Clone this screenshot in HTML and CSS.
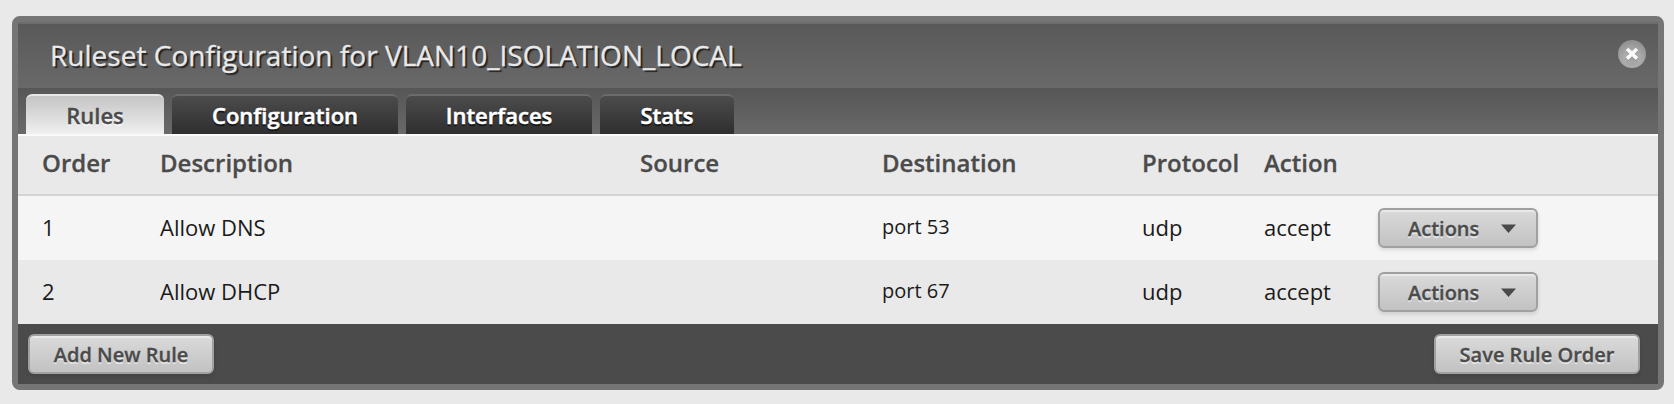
FILE: index.html
```html
<!DOCTYPE html>
<html lang="en">
<head>
<meta charset="utf-8">
<title>Ruleset Configuration</title>
<link rel="stylesheet" href="styles.css">
</head>
<body>
<section class="dialog">
  <header class="dialog-header">
    <h1 class="title">Ruleset Configuration for VLAN10_ISOLATION_LOCAL</h1>
    <button class="close" aria-label="Close">
      <svg width="30" height="30" viewBox="0 0 30 30">
        <defs><radialGradient id="disc" cx=".5" cy=".7" r=".75"><stop offset="0" stop-color="#a2a2a2"/><stop offset=".4" stop-color="#acacac"/><stop offset="1" stop-color="#8a8a8a"/></radialGradient></defs>
        <circle cx="15" cy="15" r="14" fill="url(#disc)"/>
        <path d="M10 11l10 9.6M20 11l-10 9.6" stroke="#777" stroke-width="4" opacity=".4"/>
        <path d="M10 10l10 9.6M20 10l-10 9.6" stroke="#fafafa" stroke-width="3.6"/>
      </svg>
    </button>
  </header>
  <nav class="tabs">
    <a class="tab tab-rules active"><span>Rules</span></a>
    <a class="tab tab-config"><span>Configuration</span></a>
    <a class="tab tab-interfaces"><span>Interfaces</span></a>
    <a class="tab tab-stats"><span>Stats</span></a>
  </nav>
  <div class="table">
    <div class="row head"><span>Order</span><span>Description</span><span>Source</span><span>Destination</span><span>Protocol</span><span>Action</span><span></span></div>
    <div class="row odd"><span>1</span><span>Allow DNS</span><span></span><span class="port">port 53</span><span>udp</span><span>accept</span><button class="btn actions"><span>Actions</span><svg width="15" height="9" viewBox="0 0 15 9"><path d="M0 .5h15L7.5 9z" fill="#4a4a4a"/></svg></button></div>
    <div class="row"><span>2</span><span>Allow DHCP</span><span></span><span class="port">port 67</span><span>udp</span><span>accept</span><button class="btn actions"><span>Actions</span><svg width="15" height="9" viewBox="0 0 15 9"><path d="M0 .5h15L7.5 9z" fill="#4a4a4a"/></svg></button></div>
  </div>
  <footer class="footer">
    <button class="btn add"><span>Add New Rule</span></button>
    <button class="btn save"><span>Save Rule Order</span></button>
  </footer>
</section>
</body>
</html>
```

FILE: styles.css
```css
* { box-sizing: border-box; }
body {
  margin: 0;
  padding: 16px 10px 14px 12px;
  height: 404px;
  overflow: hidden;
  background: #e9e9e9;
  font-family: "Open Sans", "Noto Sans", sans-serif;
  color: #1a1a1a;
}
.dialog {
  height: 374px;
  border: 6px solid #757575;
  border-radius: 8px;
  background: #4b4b4b;
}
.dialog-header {
  display: flex;
  justify-content: space-between;
  align-items: center;
  height: 66px;
  border-top: 2px solid #6c6c6c;
  padding: 0 11px 2px 32px;
  background: linear-gradient(#595959, #696969);
}
.title {
  margin: 0;
  font-size: 28px;
  font-weight: 400;
  line-height: 40px;
  letter-spacing: .02px;
  white-space: nowrap;
  color: #e9e9e9;
  -webkit-text-stroke: .3px #e9e9e9;
  text-shadow: 2px 2px 1px #222;
}
.close {
  width: 30px;
  height: 30px;
  margin-top: -2px;
  padding: 0;
  border: 0;
  background: none;
}
.close svg { display: block; }
.tabs {
  display: flex;
  gap: 8px;
  height: 46px;
  padding: 6px 8px 0;
  background: linear-gradient(#565656, #696969);
}
.tab {
  height: 40px;
  padding-top: 1px;
  border-top: 2px solid #6c6c6c;
  border-radius: 6px 6px 0 0;
  background: linear-gradient(#4c4c4c, #2e2e2e);
  color: #fff;
  font-size: 22px;
  font-weight: 600;
  line-height: 37px;
  text-align: center;
  -webkit-text-stroke: .5px currentColor;
  text-shadow: 0 2px 1px #111;
  white-space: nowrap;
}
.tab.active {
  border-top-color: #e6e6e6;
  background: linear-gradient(#c4c4c4, #f0f0f0);
  color: #4b4b4b;
  -webkit-text-stroke-width: .3px;
  text-shadow: 0 2px 0 #f5f5f5;
}
.tab-rules { width: 138px; }
.tab-config { width: 226px; }
.tab-interfaces { width: 186px; }
.tab-stats { width: 134px; }
.table { border-top: 2px solid #fafafa; }
.row {
  display: grid;
  grid-template-columns: 118px 480px 242px 260px 122px 114px 160px;
  align-items: center;
  height: 64px;
  padding-left: 24px;
  background: #e9e9e9;
  font-size: 22px;
  white-space: nowrap;
}
.row > span { line-height: 30px; padding-bottom: 2px; }
.row.odd { background: #f5f5f5; }
.row.head {
  height: 60px;
  border-bottom: 2px solid #d4d4d4;
  color: #4b4b4b;
  font-size: 24px;
  font-weight: 600;
  -webkit-text-stroke: .3px currentColor;
}
.row.head > span { padding-bottom: 4px; }
.row > .port { font-size: 20px; padding-bottom: 2px; }
.btn {
  display: flex;
  align-items: center;
  justify-content: center;
  height: 40px;
  padding: 0;
  border: 2px solid #a0a0a0;
  border-radius: 6px;
  background: linear-gradient(#dadada, #c2c2c2);
  box-shadow: inset 0 2px 0 #e8e8e8, 0 2px 4px rgba(0, 0, 0, .12);
  color: #4b4b4b;
  font: 600 20px/28px "Open Sans", "Noto Sans", sans-serif;
  -webkit-text-stroke: .3px currentColor;
  text-shadow: 0 2px 0 #e6e6e6;
  white-space: nowrap;
}
.btn > span { padding-top: 1px; }
.actions {
  width: 160px;
  justify-content: space-between;
  padding: 0 20px 0 28px;
}
.footer {
  display: flex;
  justify-content: space-between;
  align-items: center;
  height: 60px;
  padding: 0 18px 0 10px;
  background: #4b4b4b;
}
.add { width: 186px; }
.save { width: 206px; }
```
